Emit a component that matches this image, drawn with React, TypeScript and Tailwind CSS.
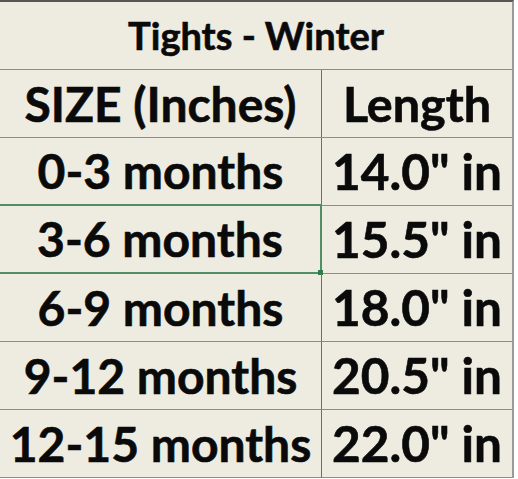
import React from 'react';

const rows = [
  { size: '0-3 months', len: '14.0" in' },
  { size: '3-6 months', len: '15.5" in' },
  { size: '6-9 months', len: '18.0" in' },
  { size: '9-12 months', len: '20.5" in' },
  { size: '12-15 months', len: '22.0" in' },
];

export default function App() {
  return (
    <div className="w-[518px] h-[479px] bg-white overflow-hidden">
      <div
        className="w-[514px] bg-[#eeece1] border-t-2 border-r-2 border-t-[#555555] border-r-[#9a9a98] text-[#0a0a0a] font-bold [-webkit-text-stroke:0.6px_#0a0a0a]"
        style={{ fontFamily: 'Lato, "Open Sans", sans-serif' }}
      >
        {/* title */}
        <div className="h-[68px] flex items-center justify-center border-b border-[#8c8c8a] text-[38px] leading-none pb-[2px]">
          Tights - Winter
        </div>

        {/* header */}
        <div className="flex h-[68px] border-b border-[#8c8c8a] leading-none">
          <div className="w-[322px] flex items-center justify-center border-r border-[#6e6e6c] text-[48px]">SIZE (Inches)</div>
          <div className="flex-1 flex items-center justify-center text-[48.5px]">Length</div>
        </div>

        {rows.map((r, i) => {
          const selected = i === 1;
          const aboveSelected = i === 0;
          let cellA = 'border-r border-b border-r-[#6e6e6c] border-b-[#8c8c8a]';
          if (aboveSelected) cellA = 'border-r border-b-2 border-r-[#6e6e6c] border-b-[#4f8f63]';
          if (selected) cellA = 'border-r-2 border-b-2 border-r-[#4f8f63] border-b-[#4f8f63]';
          return (
            <div key={r.size} className="flex h-[68px] leading-none">
              <div className={`relative w-[322px] flex items-center justify-center text-[48px] ${cellA}`}>
                {r.size}
                {selected && (
                  <span className="absolute -right-[3px] -bottom-[3px] w-[5px] h-[5px] bg-[#2f7d47]" />
                )}
              </div>
              <div className="flex-1 flex items-center justify-center border-b border-[#8c8c8a] text-[49.5px]">{r.len}</div>
            </div>
          );
        })}
      </div>
    </div>
  );
}
